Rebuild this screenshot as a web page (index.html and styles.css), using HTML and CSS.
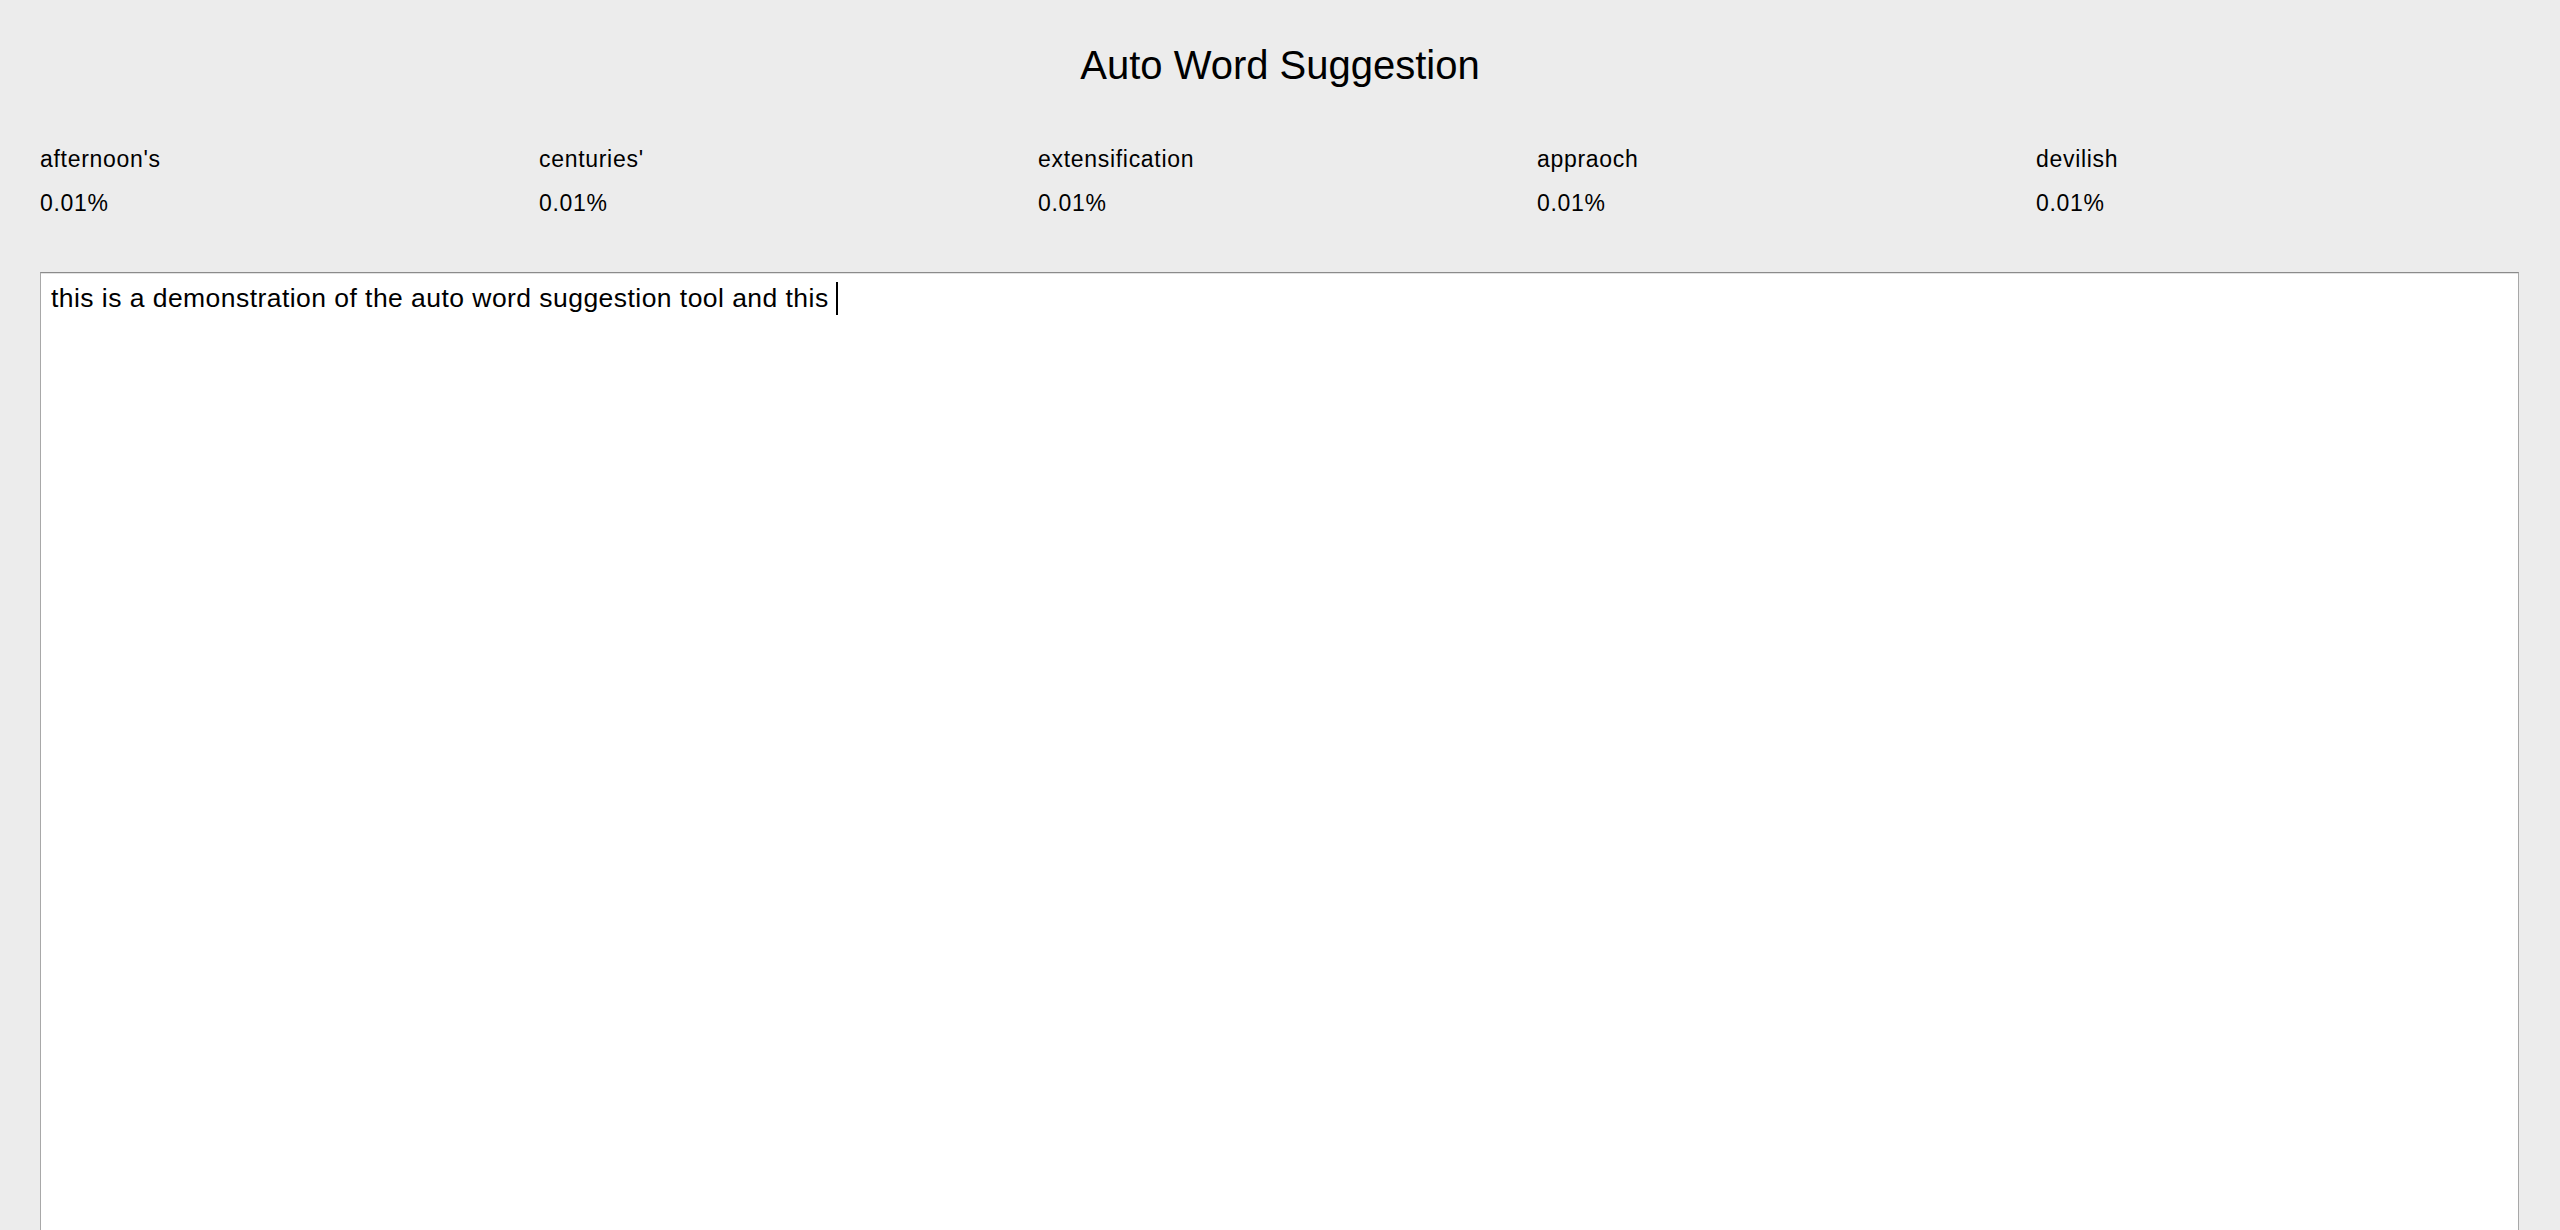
FILE: index.html
```html
<!DOCTYPE html>
<html lang="en">
<head>
<meta charset="utf-8">
<title>Auto Word Suggestion</title>
<link rel="stylesheet" href="styles.css">
</head>
<body>
<div class="app">
  <h1 class="title">Auto Word Suggestion</h1>
  <div class="suggestions">
    <div class="suggestion"><div class="word">afternoon's</div><div class="prob">0.01%</div></div>
    <div class="suggestion"><div class="word">centuries'</div><div class="prob">0.01%</div></div>
    <div class="suggestion"><div class="word">extensification</div><div class="prob">0.01%</div></div>
    <div class="suggestion"><div class="word">appraoch</div><div class="prob">0.01%</div></div>
    <div class="suggestion"><div class="word">devilish</div><div class="prob">0.01%</div></div>
  </div>
  <div class="editor">this is a demonstration of the auto word suggestion tool and this <span class="caret"></span></div>
</div>
</body>
</html>
```

FILE: styles.css
```css
html, body {
  margin: 0;
  padding: 0;
  height: 100%;
  overflow: hidden;
  background: #ececec;
}

body {
  font-family: "Liberation Sans", Arial, Helvetica, sans-serif;
  color: #000;
}

.app {
  display: flex;
  flex-direction: column;
  padding-top: 42px;
}

.title {
  margin: 0;
  font-size: 40px;
  font-weight: normal;
  line-height: 46px;
  text-align: center;
}

.suggestions {
  display: grid;
  grid-template-columns: repeat(5, 1fr);
  padding: 0 25px 0 40px;
  margin-top: 58px;
}

.suggestion {
  display: flex;
  flex-direction: column;
  gap: 18px;
  font-size: 23px;
  letter-spacing: 0.7px;
  line-height: 26px;
}

.editor {
  margin: 56px 41px 0 40px;
  height: 1200px;
  background: #fff;
  border: 1px solid #a8a8a8;
  border-top-color: #8b8b8b;
  box-shadow: inset 0 1px 0 #e2e2e2;
  padding: 9px 10px 0 10px;
  font-size: 26.5px;
  letter-spacing: 0.45px;
  line-height: 33px;
  white-space: pre-wrap;
}

.caret {
  display: inline-block;
  width: 2px;
  height: 33px;
  background: #000;
  vertical-align: top;
}
```
